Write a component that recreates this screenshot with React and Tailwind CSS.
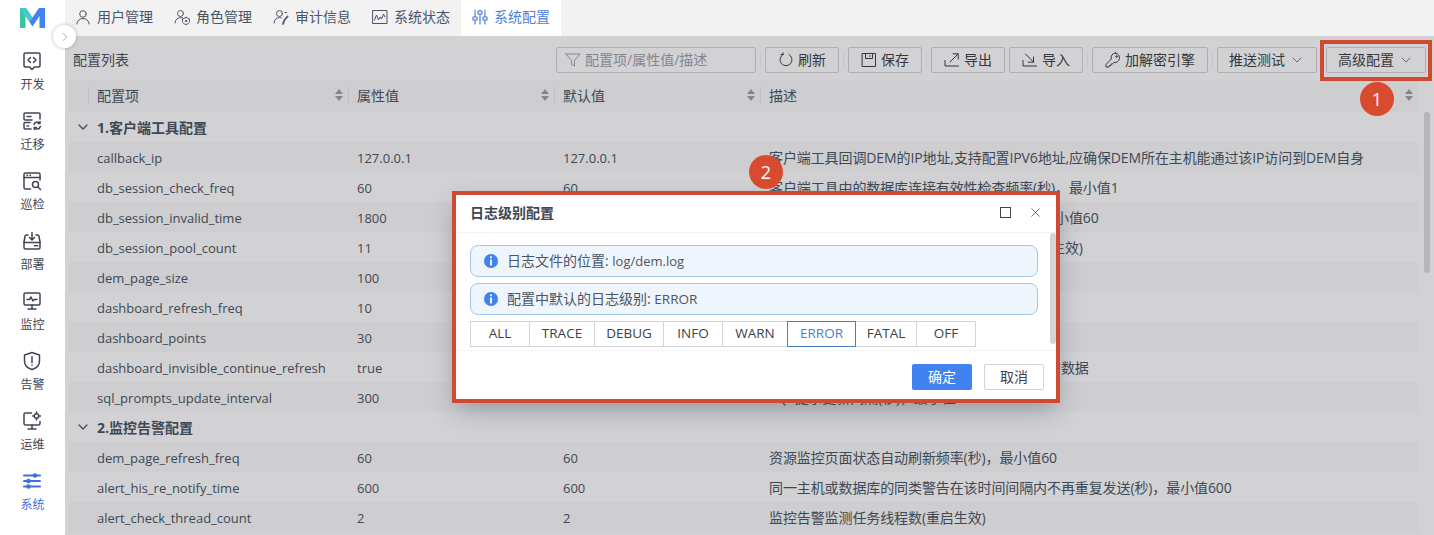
import React from 'react';
import { ChevronDown, ChevronRight, X } from 'lucide-react';

const navItems = [
  { label: '开发', icon: 'dev' },
  { label: '迁移', icon: 'migrate' },
  { label: '巡检', icon: 'inspect' },
  { label: '部署', icon: 'deploy' },
  { label: '监控', icon: 'monitor' },
  { label: '告警', icon: 'alert' },
  { label: '运维', icon: 'ops' },
  { label: '系统', icon: 'system', active: true },
];

const rows = [
  { group: '1.客户端工具配置' },
  { name: 'callback_ip', value: '127.0.0.1', def: '127.0.0.1', desc: '客户端工具回调DEM的IP地址,支持配置IPV6地址,应确保DEM所在主机能通过该IP访问到DEM自身' },
  { name: 'db_session_check_freq', value: '60', def: '60', desc: '客户端工具中的数据库连接有效性检查频率(秒)，最小值1' },
  { name: 'db_session_invalid_time', value: '1800', def: '1800', desc: '客户端工具中的数据库连接的失效时间(秒)，最小值60' },
  { name: 'db_session_pool_count', value: '11', def: '11', desc: '客户端工具中的数据库连接池大小(重启服务后生效)' },
  { name: 'dem_page_size', value: '100', def: '100', desc: '查询结果每页显示的行数' },
  { name: 'dashboard_refresh_freq', value: '10', def: '10', desc: '仪表盘自动刷新频率(秒)' },
  { name: 'dashboard_points', value: '30', def: '30', desc: '仪表盘图表显示的点数' },
  { name: 'dashboard_invisible_continue_refresh', value: 'true', def: 'true', desc: '仪表盘页面不可见时是否继续刷新并获取最新的数据' },
  { name: 'sql_prompts_update_interval', value: '300', def: '300', desc: 'SQL提示更新间隔(秒)，最小值60' },
  { group: '2.监控告警配置' },
  { name: 'dem_page_refresh_freq', value: '60', def: '60', desc: '资源监控页面状态自动刷新频率(秒)，最小值60' },
  { name: 'alert_his_re_notify_time', value: '600', def: '600', desc: '同一主机或数据库的同类警告在该时间间隔内不再重复发送(秒)，最小值600' },
  { name: 'alert_check_thread_count', value: '2', def: '2', desc: '监控告警监测任务线程数(重启生效)' },
];

function NavIcon({ name, className }) {
  const c = { fill: 'none', stroke: 'currentColor', strokeWidth: 1.5, strokeLinecap: 'round', strokeLinejoin: 'round' };
  return (
    <svg width="20" height="20" viewBox="0 0 20 20" className={className} {...c}>
      {name === 'dev' && (
        <>
          <path d="M3.500 2h13A1.500 1.500 0 0 1 18 3.500v11a1.500 1.500 0 0 1-1.500 1.500h-4L10 18.500 7.500 16h-4A1.500 1.500 0 0 1 2 14.500v-11A1.500 1.500 0 0 1 3.500 2z" />
          <path d="M8.500 6.500 6 9l2.500 2.500M11.500 6.500 14 9l-2.500 2.500" />
        </>
      )}
      {name === 'migrate' && (
        <>
          <path d="M18 8V3A1 1 0 0 0 17 2H3A1 1 0 0 0 2 3v5a1 1 0 0 0 1 1h7" />
          <path d="M8 11.500H3a1 1 0 0 0-1 1V17a1 1 0 0 0 1 1h6" />
          <path d="M5 5.500h4M5 15h1.500" />
          <path d="M12 13.500a3.200 3.200 0 0 1 5.700-1.300M18.300 15.500a3.200 3.200 0 0 1-5.700 1.300M18 10.500v2h-2M12.300 18.500v-2h2" />
        </>
      )}
      {name === 'inspect' && (
        <>
          <path d="M8.500 18H3.500A1.500 1.500 0 0 1 2 16.500v-13A1.500 1.500 0 0 1 3.500 2h13A1.500 1.500 0 0 1 18 3.500V9" />
          <path d="M2 6.500h16M5 4.300h.5M8 4.300h.5" />
          <circle cx="13.500" cy="13.500" r="3" />
          <path d="m16 16 2.500 2.500" />
        </>
      )}
      {name === 'deploy' && (
        <>
          <path d="M6 4H4.500A1.500 1.500 0 0 0 3 5.500L2 11v5.500A1.500 1.500 0 0 0 3.500 18h13a1.500 1.500 0 0 0 1.500-1.500V11l-1-5.500A1.500 1.500 0 0 0 15.500 4H14" />
          <path d="M2 11.500h16M10 1.500v7M7.500 6.500 10 9l2.500-2.500M12.500 14.800h1.500M15.300 14.800h.5" />
        </>
      )}
      {name === 'monitor' && (
        <>
          <rect x="2" y="2" width="16" height="12" rx="1.500" />
          <path d="M10 14v4M6 18h8M5 8.500h2.500l1.500-2.500 2 4 1.200-1.500H15" />
        </>
      )}
      {name === 'alert' && (
        <>
          <path d="M10 1.500 17.500 4v6c0 4.500-3.500 7.300-7.500 8.500C6 17.300 2.500 14.500 2.500 10V4L10 1.500z" />
          <path d="M10 5.500v6M10 14v.3" />
        </>
      )}
      {name === 'ops' && (
        <>
          <path d="M9.500 2H3.500A1.500 1.500 0 0 0 2 3.500v9A1.500 1.500 0 0 0 3.500 14h13a1.500 1.500 0 0 0 1.500-1.500V10.500" />
          <path d="M10 14v4M6 18h8" />
          <circle cx="14.500" cy="5" r="2.200" />
          <path d="M14.500 1v1M14.500 8v1M10.500 5h1M17.500 5h1" />
        </>
      )}
      {name === 'system' && (
        <>
          <path strokeWidth="2" d="M2 4.500h16M2 10h16M2 15.500h16" />
          <circle cx="13" cy="4.500" r="2.300" fill="currentColor" stroke="none" />
          <circle cx="6.500" cy="10" r="2.300" fill="currentColor" stroke="none" />
          <circle cx="6.500" cy="15.500" r="2.300" fill="currentColor" stroke="none" />
        </>
      )}
    </svg>
  );
}

function TabIcon({ name }) {
  const c = { fill: 'none', stroke: 'currentColor', strokeWidth: 1, strokeLinecap: 'round', strokeLinejoin: 'round' };
  return (
    <svg width="16" height="16" viewBox="0 0 16 16" {...c}>
      {name === 'user' && (
        <>
          <circle cx="8" cy="5" r="3.300" />
          <path d="M1.800 15c.3-3.500 3-5.500 6.200-5.500s5.900 2 6.200 5.500" />
        </>
      )}
      {name === 'role' && (
        <>
          <circle cx="6.500" cy="4.500" r="3" />
          <path d="M1 14c.2-3.500 2.500-5.300 5.500-5.300 1 0 1.800.2 2.500.5" />
          <path d="M12 8.500 15.500 10v2.500c0 1.500-1.500 2.500-3.500 3-2-.5-3.500-1.500-3.500-3V10L12 8.500z" />
          <circle cx="12" cy="12" r=".7" fill="currentColor" />
        </>
      )}
      {name === 'audit' && (
        <>
          <circle cx="6.500" cy="4.500" r="3" />
          <path d="M1 14c.2-3.500 2.500-5.300 5.500-5.300 .7 0 1.300.1 1.800.3" />
          <path strokeWidth="1.800" d="m10 15 1.500-4 3-3.500" />
          <path d="M12 3.500h1.500" />
        </>
      )}
      {name === 'status' && (
        <>
          <rect x="1" y="1.500" width="14" height="13" />
          <path d="m2.500 11 2-5 2 5 1.500-3 1.500 2 2-5 1.500 3" />
        </>
      )}
      {name === 'config' && (
        <>
          <path d="M3 1v7M3 11v4M8 1v1M8 5v10M13 1v7M13 11v4" strokeWidth="1.200" />
          <rect x="1" y="8" width="4" height="3" strokeWidth="1.200" />
          <rect x="6" y="2" width="4" height="3" strokeWidth="1.200" />
          <rect x="11" y="8" width="4" height="3" strokeWidth="1.200" />
        </>
      )}
    </svg>
  );
}

function BtnIcon({ name }) {
  const c = { fill: 'none', stroke: 'currentColor', strokeWidth: 1, strokeLinecap: 'round', strokeLinejoin: 'round' };
  return (
    <svg width="16" height="16" viewBox="0 0 16 16" {...c}>
      {name === 'refresh' && <path d="M5 2.500a6 6 0 1 0 6 0M5 2.500V.800M5 2.500H3" />}
      {name === 'save' && (
        <>
          <rect x="1.500" y="1.500" width="13" height="13" />
          <path d="M4.500 1.500v5h7v-5M9 3.500v1" />
        </>
      )}
      {name === 'export' && <path d="M1 8.500V14h13.500M6 10l8-8M9 1.800h5.200V7" />}
      {name === 'import' && <path d="M1 8.500V14h13.500M3.500 2l8 8M6.300 10.200h5.200V5" />}
      {name === 'key' && (
        <>
          <path d="M10.500 1a4.500 4.500 0 0 0-4.200 6L1 12.500V15h3l.5-1.500H6V12h1.500l1.400-1.500A4.500 4.500 0 1 0 10.500 1z" />
          <circle cx="11.500" cy="4.500" r=".8" />
        </>
      )}
      {name === 'filter' && <path d="M1 2h14L9.500 8.500V14l-3-1.500v-4L1 2z" />}
    </svg>
  );
}

function SortIcon() {
  return (
    <svg width="8" height="14" viewBox="0 0 8 14" className="text-[#9ca3af]" fill="currentColor">
      <path d="M4 1 8 6H0zM4 13 0 8h8z" />
    </svg>
  );
}

function Btn({ icon, label, chevron, w }) {
  return (
    <button className={`${w} h-[26px] pb-[1px] flex items-center justify-center gap-1 rounded-[2px] border border-[#d4d4d8] bg-white text-[#3f3f46]`}>
      {icon && <BtnIcon name={icon} />}
      <span>{label}</span>
      {chevron && <ChevronDown size={16} strokeWidth={1} />}
    </button>
  );
}

function Sep() {
  return <span className="w-px h-[14px] mt-[6px] bg-[#f0f0f2] mx-1" />;
}

function Info({ children }) {
  return (
    <div className="h-[32px] flex items-center gap-2 px-3 rounded-lg border border-[#a3c8ea] bg-[#eef5fd] text-[#4b5563]">
      <svg width="16" height="16" viewBox="0 0 16 16">
        <circle cx="8" cy="8" r="7" fill="#3f82f0" />
        <rect x="7.100" y="3.300" width="1.800" height="1.900" fill="#fff" />
        <rect x="7.100" y="6.500" width="1.800" height="6" fill="#fff" />
      </svg>
      <span className="pb-[1px]">{children}</span>
    </div>
  );
}

export default function App() {
  const levels = [
    ['ALL', 'w-[60px]'],
    ['TRACE', 'w-[66px]'],
    ['DEBUG', 'w-[70px]'],
    ['INFO', 'w-[60px]'],
    ['WARN', 'w-[66px]'],
    ['ERROR', 'w-[69px]'],
    ['FATAL', 'w-[62px]'],
    ['OFF', 'w-[60px]'],
  ];

  return (
    <div className="relative flex h-[535px] w-[1434px] overflow-hidden bg-white text-[14px] text-[#4b5563] font-['Open_Sans','Noto_Sans_CJK_SC',sans-serif]">
      {/* sidebar */}
      <aside className="w-[65px] shrink-0 flex flex-col items-center bg-white">
        <div className="h-[51px] pt-[8px]">
          <svg width="25" height="20" viewBox="0 0 25 20">
            <path d="M0 0h6l6.500 9.500L9.500 14 5.500 8v12H0z" fill="#38c6a0" />
            <path d="M0 0h6l6.500 9.500-3 4.500z" fill="#4ac7d0" />
            <path d="M25 0h-6l-6.500 9.500-3 4.500 3 4.500 7-10.500v12H25z" fill="#3f82f0" />
          </svg>
        </div>
        {navItems.map((n) => (
          <div key={n.label} className={`h-[60px] flex flex-col items-center gap-[5px] text-[12px] ${n.active ? 'text-[#3f6fe0]' : 'text-[#3f4653]'}`}>
            <NavIcon name={n.icon} />
            <span className="leading-[18px]">{n.label}</span>
          </div>
        ))}
      </aside>

      <main className="relative flex-1 min-w-0 flex flex-col">
        {/* tabs */}
        <div className="h-[36px] shrink-0 flex bg-[#f2f2f3] gap-px">
          <div className="w-[98px] pb-[3px] flex items-center justify-center gap-[6px]"><TabIcon name="user" />用户管理</div>
          <div className="w-[98px] pb-[3px] flex items-center justify-center gap-[6px]"><TabIcon name="role" />角色管理</div>
          <div className="w-[98px] pb-[3px] flex items-center justify-center gap-[6px]"><TabIcon name="audit" />审计信息</div>
          <div className="w-[98px] pb-[3px] flex items-center justify-center gap-[6px]"><TabIcon name="status" />系统状态</div>
          <div className="w-[100px] pb-[3px] flex items-center justify-center gap-[6px] bg-white text-[#4d82dd]"><TabIcon name="config" />系统配置</div>
        </div>

        {/* page */}
        <div className="relative flex-1 min-h-0 overflow-hidden bg-white">
          <div className="h-[44px] flex items-start pt-[11px] px-[8px]">
            <span className="mr-auto text-[#52525b] leading-[26px]">配置列表</span>
            <div className="w-[200px] h-[26px] pb-[1px] flex items-center gap-1 px-2 rounded-[2px] border border-[#d4d4d8] text-[#a1a1aa]">
              <BtnIcon name="filter" />
              配置项/属性值/描述
            </div>
            <Sep />
            <Btn icon="refresh" label="刷新" w="w-[74px]" />
            <Sep />
            <Btn icon="save" label="保存" w="w-[74px]" />
            <Sep />
            <Btn icon="export" label="导出" w="w-[74px]" />
            <span className="w-[4px]" />
            <Btn icon="import" label="导入" w="w-[74px]" />
            <Sep />
            <Btn icon="key" label="加解密引擎" w="w-[116px]" />
            <Sep />
            <Btn label="推送测试" chevron w="w-[100px]" />
            <Sep />
            <Btn label="高级配置" chevron w="w-[100px]" />
          </div>

          <div className="ml-[4px] mr-[16px]">
            <div className="h-[32px] pb-[2px] flex items-center bg-[#fafafa]">
              <div className="w-[19px] shrink-0" />
              <div className="w-[260px] shrink-0 h-[16px] flex items-center justify-between pl-[8px] pr-[5px] border-l border-[#e8e8ea]">配置项<SortIcon /></div>
              <div className="w-[206px] shrink-0 h-[16px] flex items-center justify-between pl-[8px] pr-[5px] border-l border-[#e8e8ea]">属性值<SortIcon /></div>
              <div className="w-[206px] shrink-0 h-[16px] flex items-center justify-between pl-[8px] pr-[5px] border-l border-[#e8e8ea]">默认值<SortIcon /></div>
              <div className="flex-1 h-[16px] flex items-center justify-between pl-[8px] pr-[5px] border-l border-[#e8e8ea]">描述<SortIcon /></div>
            </div>
            {rows.map((r, i) =>
              r.group ? (
                <div key={r.group} className="h-[30px] flex items-center font-bold text-[#4b5563]">
                  <span className="w-[28px] flex justify-center"><ChevronDown size={16} strokeWidth={1.800} /></span>
                  {r.group}
                </div>
              ) : (
                <div key={r.name} className={`h-[30px] flex items-center ${i % 2 === 1 || i === 11 || i === 13 ? 'bg-[#fafafa]' : ''}`}>
                  <div className="w-[288px] shrink-0 pl-[28px] pt-[4px] text-[13px]">{r.name}</div>
                  <div className="w-[206px] shrink-0 pt-[4px] text-[13px]">{r.value}</div>
                  <div className="w-[206px] shrink-0 pt-[4px] text-[13px]">{r.def}</div>
                  <div className="flex-1 whitespace-nowrap tracking-[-0.1px]">{r.desc}</div>
                </div>
              )
            )}
          </div>

          {/* table scrollbar */}
          <div className="absolute right-[4px] top-[76px] w-[6px] h-[161px] rounded-[3px] bg-[#dcdce0]" />

          {/* dim layer */}
          <div className="absolute inset-0 bg-[rgba(15,15,25,0.19)]" />
        </div>

        {/* collapse button */}
        <button className="absolute left-[-12px] top-[25px] w-[23px] h-[23px] rounded-full bg-white shadow-[0_0_4px_rgba(0,0,0,0.25)] flex items-center justify-center text-[#71717a]">
          <ChevronRight size={14} strokeWidth={1} />
        </button>
      </main>

      {/* dialog */}
      <div className="absolute left-[456px] top-[195px] w-[600px] h-[204px] flex flex-col bg-white shadow-[0_10px_24px_rgba(40,50,80,0.35)]">
        <div className="h-[38px] shrink-0 flex items-center px-[14px] pb-[2px] border-b border-[#f3f3f5]">
          <span className="mr-auto font-bold text-[#3f4653]">日志级别配置</span>
          <span className="w-[11px] h-[11px] border border-[#3f4653] mr-[17px]" />
          <X size={15} strokeWidth={1.200} className="mr-[-1px] text-[#3f4653]" />
        </div>
        <div className="relative h-[118px] shrink-0 border-b border-[#f3f3f5] pl-[14px] pr-[18px] pt-[12px] flex flex-col gap-[6px]">
          <Info>日志文件的位置: <span className="text-[13px]">log/dem.log</span></Info>
          <Info>配置中默认的日志级别: <span className="text-[13.5px]">ERROR</span></Info>
          <div className="flex h-[26px] text-[13.5px] text-[#3f3f46]">
            {levels.map(([l, w], i) => (
              <div key={l} className={`${w} flex items-center justify-center pb-[2px] border ${l === 'ERROR' ? 'relative border-[#4a7fc0] text-[#4a7fc0]' : 'border-[#d4d4d8]'} ${i > 0 ? 'ml-[-1px]' : ''}`}>
                {l}
              </div>
            ))}
          </div>
          <div className="absolute right-0 top-0 w-[6px] h-[111px] rounded-[3px] bg-[#d4d4d8]" />
        </div>
        <div className="flex-1 flex items-start justify-end gap-3 pr-[12px] pt-[13px]">
          <button className="w-[60px] h-[26px] pb-[1px] rounded-[2px] bg-[#3f82f0] text-white">确定</button>
          <button className="w-[60px] h-[26px] pb-[1px] rounded-[2px] border border-[#d4d4d8] text-[#3f3f46]">取消</button>
        </div>
      </div>

      {/* annotations */}
      <div className="absolute left-[1320px] top-[40px] w-[112px] h-[41px] border-[4px] border-[#cf4a31]" />
      <div className="absolute left-[452px] top-[191px] w-[608px] h-[212px] border-[4px] border-[#cf4a31]" />
      <div className="absolute left-[1360px] top-[82px] w-[34px] h-[34px] rounded-full bg-[#d94b2e] flex items-center justify-center text-white text-[18px]">1</div>
      <div className="absolute left-[749px] top-[155px] w-[34px] h-[34px] rounded-full bg-[#d94b2e] flex items-center justify-center text-white text-[18px]">2</div>
    </div>
  );
}
